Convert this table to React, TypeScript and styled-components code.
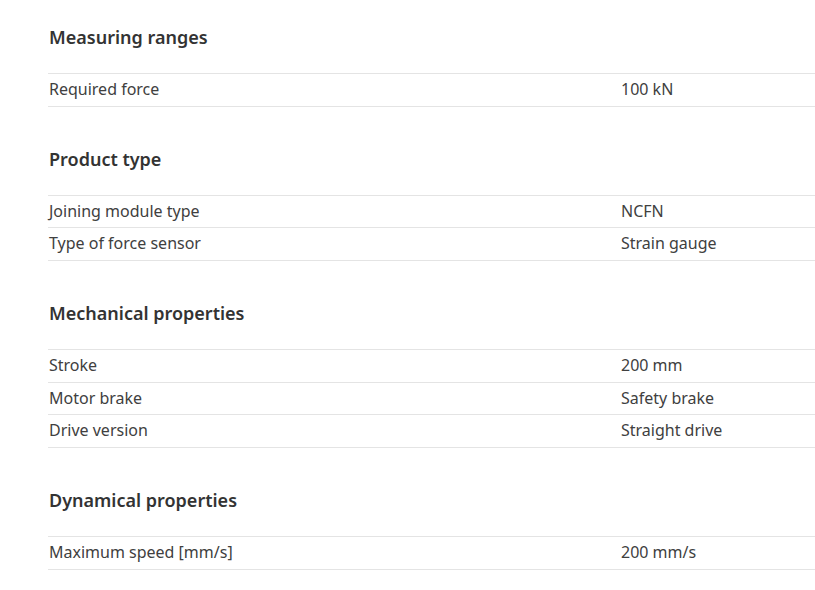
import React from "react";
import styled, { createGlobalStyle } from "styled-components";

const Global = createGlobalStyle`
  html, body { margin: 0; padding: 0; background: #fff; }
  body { font-family: "Noto Sans", "Open Sans", sans-serif; color: #3a3a3a; }
`;

const Page = styled.div`
  padding: 25px 0 0 48px;
`;

const Section = styled.section`
  margin-bottom: 40px;
`;

const Heading = styled.h3`
  margin: 0 0 24px 1px;
  font-size: 18px;
  font-weight: 600;
  line-height: 24px;
  color: #333;
`;

const Table = styled.div`
  border-top: 1px solid #e4e4e4;
`;

const Row = styled.div`
  display: grid;
  grid-template-columns: 572px 1fr;
  border-bottom: 1px solid #e4e4e4;
  padding: 5px 0 5px;
  font-size: 16px;
  line-height: 21.67px;
  color: #404040;
`;

const Cell = styled.div`
  padding-left: 1px;
`;

const data: { title: string; rows: [string, string][] }[] = [
  { title: "Measuring ranges", rows: [["Required force", "100 kN"]] },
  {
    title: "Product type",
    rows: [
      ["Joining module type", "NCFN"],
      ["Type of force sensor", "Strain gauge"],
    ],
  },
  {
    title: "Mechanical properties",
    rows: [
      ["Stroke", "200 mm"],
      ["Motor brake", "Safety brake"],
      ["Drive version", "Straight drive"],
    ],
  },
  { title: "Dynamical properties", rows: [["Maximum speed [mm/s]", "200 mm/s"]] },
];

export default function App() {
  return (
    <>
      <Global />
      <Page>
        {data.map((s) => (
          <Section key={s.title}>
            <Heading>{s.title}</Heading>
            <Table>
              {s.rows.map(([k, v]) => (
                <Row key={k}>
                  <Cell>{k}</Cell>
                  <Cell>{v}</Cell>
                </Row>
              ))}
            </Table>
          </Section>
        ))}
      </Page>
    </>
  );
}
